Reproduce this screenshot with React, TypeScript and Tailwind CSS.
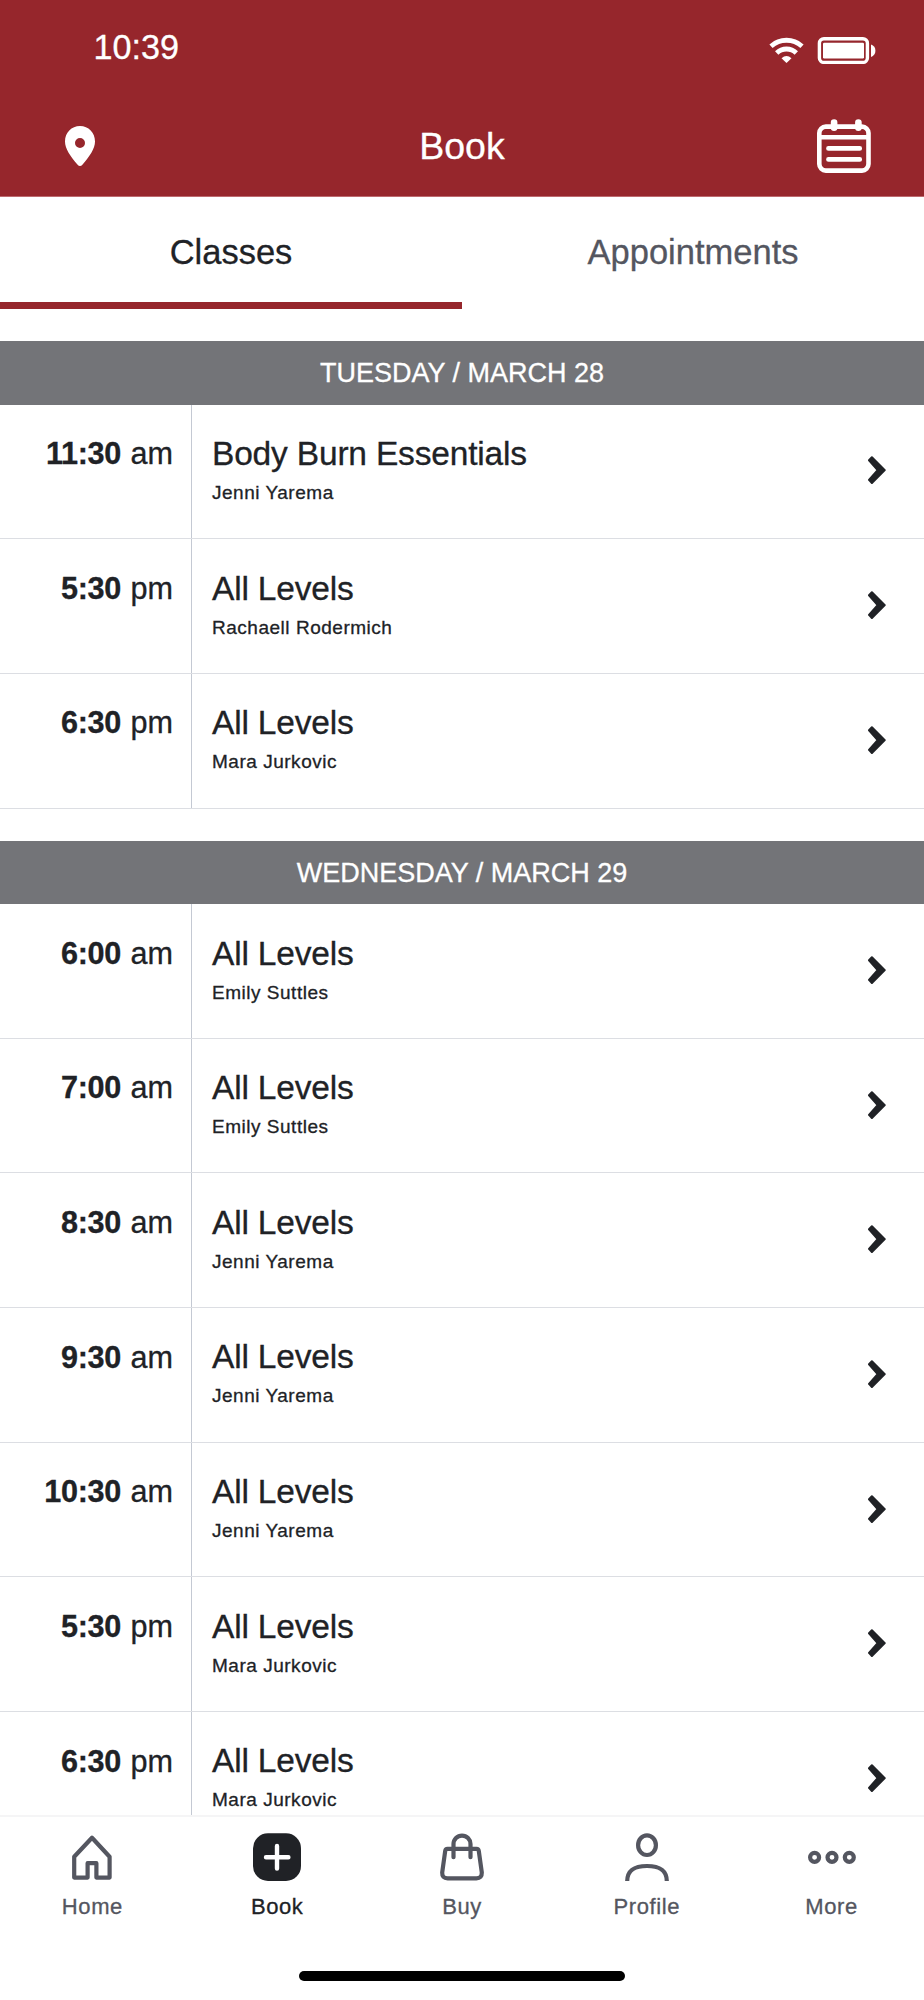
import type { ReactNode } from 'react';
import clsx from 'clsx';

interface ClassItem {
  time: string;
  period: 'am' | 'pm';
  title: string;
  instructor: string;
}

interface Day {
  label: string;
  items: ClassItem[];
}

const DAYS: Day[] = [
  {
    label: 'TUESDAY / MARCH 28',
    items: [
      { time: '11:30', period: 'am', title: 'Body Burn Essentials', instructor: 'Jenni Yarema' },
      { time: '5:30', period: 'pm', title: 'All Levels', instructor: 'Rachaell Rodermich' },
      { time: '6:30', period: 'pm', title: 'All Levels', instructor: 'Mara Jurkovic' },
    ],
  },
  {
    label: 'WEDNESDAY / MARCH 29',
    items: [
      { time: '6:00', period: 'am', title: 'All Levels', instructor: 'Emily Suttles' },
      { time: '7:00', period: 'am', title: 'All Levels', instructor: 'Emily Suttles' },
      { time: '8:30', period: 'am', title: 'All Levels', instructor: 'Jenni Yarema' },
      { time: '9:30', period: 'am', title: 'All Levels', instructor: 'Jenni Yarema' },
      { time: '10:30', period: 'am', title: 'All Levels', instructor: 'Jenni Yarema' },
      { time: '5:30', period: 'pm', title: 'All Levels', instructor: 'Mara Jurkovic' },
      { time: '6:30', period: 'pm', title: 'All Levels', instructor: 'Mara Jurkovic' },
    ],
  },
];

const NAV_ITEMS: { label: string; icon: ReactNode; active?: boolean }[] = [
  {
    label: 'Home',
    icon: <path d="M24 4.8 41.6 23.8v20.8H28.4V30.2h-8.8v14.4H6.2V23.8Z" />,
  },
  {
    label: 'Book',
    active: true,
    icon: (
      <>
        <rect y="0.3" width="48" height="47.7" rx="15" fill="currentColor" stroke="none" />
        <path d="M24 13v22.6M13 24.3h22.4" stroke="#fff" strokeWidth="4.4" />
      </>
    ),
  },
  {
    label: 'Buy',
    icon: (
      <>
        <path d="M9.5 15.8h29q2 0 2.3 2.2l3 21.5q.2 5.9-5.4 5.9H9.6q-5.6 0-5.4-5.9l3-21.5q.3-2.2 2.3-2.2Z" />
        <path d="M15.5 24.2V11.1a8.5 8.5 0 0 1 17 0v13.1" />
      </>
    ),
  },
  {
    label: 'Profile',
    icon: (
      <>
        <ellipse cx="24" cy="12.2" rx="8.9" ry="9.8" />
        <path d="M4.2 48C4.4 36 13 33 24 33s19.6 3 19.8 15" strokeLinecap="butt" />
      </>
    ),
  },
  {
    label: 'More',
    icon: (
      <>
        <circle cx="6.6" cy="24.3" r="4.5" />
        <circle cx="24" cy="24.3" r="4.5" />
        <circle cx="41.3" cy="24.3" r="4.5" />
      </>
    ),
  },
];

function StatusIcons() {
  return (
    <svg className="h-[28px] w-[108px]" viewBox="768 36 108 28" fill="none" stroke="#fff">
      <path d="M771 46.2a23.2 23.2 0 0 1 31 0" strokeWidth="4.8" />
      <path d="M776.7 53a14 14 0 0 1 19.6 0" strokeWidth="4.8" />
      <path d="m786.5 63-5-4.8q5-4.6 10 0Z" fill="#fff" stroke="none" />
      <rect x="819.4" y="38.7" width="48" height="23.7" rx="4.5" strokeWidth="3.4" />
      <rect x="823" y="42.8" width="41" height="15.7" rx="1.2" fill="#fff" stroke="none" />
      <path d="M871 44.5q4.4 1.6 4.4 6.2T871 57Z" fill="#fff" stroke="none" />
    </svg>
  );
}

function PinIcon() {
  return (
    <svg className="h-[40px] w-[30px]" viewBox="0 0 30 40" fill="#fff">
      <path
        fillRule="evenodd"
        d="M15 0C23.5 0 30 6.6 30 15.5c0 7.5-5.5 14.5-12.4 23q-2.6 3-5.2 0C5.5 30 0 23 0 15.5 0 6.6 6.5 0 15 0Zm0 12a5 5 0 1 0 0 10 5 5 0 0 0 0-10Z"
      />
    </svg>
  );
}

function CalendarIcon() {
  return (
    <svg className="h-[54px] w-[54px]" viewBox="0 0 54 54" fill="none" stroke="#fff" strokeLinecap="round">
      <rect x="2.3" y="7.6" width="49.2" height="44" rx="6.5" strokeWidth="4.6" />
      <path d="M3 18.3h48" strokeWidth="4.4" strokeLinecap="butt" />
      <path d="M11.5 29.4h31.2M11.5 40.4h31.2" strokeWidth="4.8" />
      <path d="M17.1 3.5v5.2M41.4 3.5v5.2" strokeWidth="6.6" />
    </svg>
  );
}

function Chevron() {
  return (
    <svg className="h-[28px] w-[18px] shrink-0" viewBox="0 0 18 28" fill="currentColor" stroke="currentColor" strokeWidth="2" strokeLinejoin="round">
      <path d="m3.9 1.2 12.9 12.9L3.9 27 1 23.9l8.6-9.8L1 4.3Z" />
    </svg>
  );
}

function ClassRow({ item }: { item: ClassItem }) {
  return (
    <div className="flex h-[134.67px] border-b border-[#dcdee3]">
      <div className="w-[192px] shrink-0 border-r border-[#c4c9d3] pt-[28.5px] pr-[18px] text-right text-[30.6px] leading-[40px] whitespace-nowrap [word-spacing:1px]">
        <span className="font-bold tracking-[-0.3px]">{item.time}</span> {item.period}
      </div>
      <div className="min-w-0 flex-1 pt-[28.4px] pl-[20px]">
        <p className="text-[33.5px] leading-[42px] tracking-[-0.18px]">{item.title}</p>
        <p className="mt-[4px] text-[19px] leading-[28px] tracking-[0.52px]">{item.instructor}</p>
      </div>
      <div className="flex items-center pr-[38px] pb-[2px]">
        <Chevron />
      </div>
    </div>
  );
}

export default function App() {
  return (
    <div className="flex h-[2000px] w-[924px] flex-col overflow-hidden bg-white font-['Liberation_Sans',Arial,sans-serif] text-[#202226] [-webkit-text-stroke:0.3px_currentColor]">
      <header className="h-[197px] shrink-0 border-b border-[#bd6a6f] bg-[#96262c] text-white">
        <div className="flex h-[96px] justify-between pr-[48px] pl-[93.5px]">
          <span className="pt-[27px] text-[34.2px] leading-[41px]">10:39</span>
          <div className="pt-[36px]">
            <StatusIcons />
          </div>
        </div>
        <div className="grid h-[100px] grid-cols-3 items-center pr-[53px] pl-[65px]">
          <PinIcon />
          <h1 className="-ml-[12px] text-center text-[37.5px] leading-[44px]">Book</h1>
          <div className="flex justify-end">
            <CalendarIcon />
          </div>
        </div>
      </header>

      <div className="grid h-[112px] shrink-0 grid-cols-2 text-center text-[34.5px] leading-[44px]">
        <button className="border-b-[7px] border-[#96262c] pt-[4px]">Classes</button>
        <button className="border-b-[7px] border-transparent pt-[4px] text-[#545660]">Appointments</button>
      </div>

      <main className="min-h-0 flex-1 overflow-hidden">
        {DAYS.map((day) => (
          <section key={day.label} className="pt-[32.2px]">
            <h2 className="h-[63.4px] bg-[#737478] text-center text-[27px] leading-[64px] text-white">{day.label}</h2>
            {day.items.map((item) => (
              <ClassRow key={item.time + item.period} item={item} />
            ))}
          </section>
        ))}
      </main>

      <nav className="h-[185px] shrink-0 border-t-2 border-[#f5f5f6] bg-white">
        <div className="grid h-[156px] grid-cols-5 pt-[16px]">
          {NAV_ITEMS.map(({ label, icon, active }) => (
            <div key={label} className={clsx('flex flex-col items-center', active ? 'text-[#202226]' : 'text-[#545660]')}>
              <svg className="size-12" viewBox="0 0 48 48" fill="none" stroke="currentColor" strokeWidth="4.2" strokeLinecap="round" strokeLinejoin="round">
                {icon}
              </svg>
              <span className="mt-[12px] text-[22px] leading-[28px] tracking-[0.6px]">{label}</span>
            </div>
          ))}
        </div>
        <div className="mx-auto -mt-[2px] h-[10px] w-[326px] rounded-full bg-black" />
      </nav>
    </div>
  );
}
